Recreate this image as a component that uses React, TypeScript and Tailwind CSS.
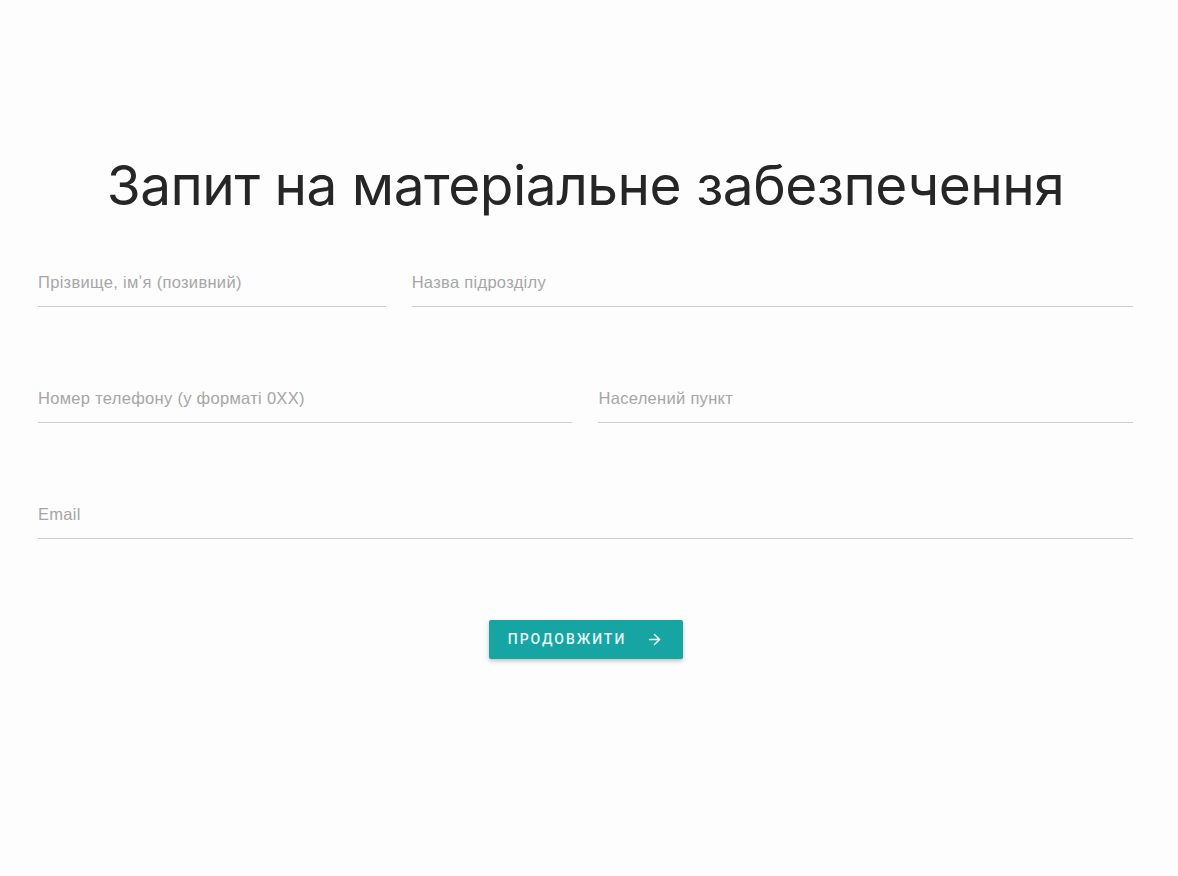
import { ArrowRight } from 'lucide-react';

interface FieldProps {
  label: string;
  span: string;
}

function Field({ label, span }: FieldProps) {
  return (
    <label className={`${span} flex flex-col`}>
      <input
        placeholder={label}
        className="h-[40px] w-full bg-transparent pb-[8px] text-[16.5px] tracking-[0.3px] text-[#555] placeholder:text-[#a6a6a6] outline-none border-b-[1.5px] border-[#cdcdcd]"
        style={{ fontFamily: '"Liberation Sans", Arial, sans-serif' }}
      />
    </label>
  );
}

export default function App() {
  return (
    <div className="min-h-[876px] w-full bg-[#fdfdfd]" style={{ fontFamily: 'Roboto, "Noto Sans", sans-serif' }}>
      <div className="pl-[38px] pr-[45px] pt-[150px]">
        <h1
          className="text-center text-[55px] leading-[70px] font-normal text-[#262626] tracking-[-0.5px]"
          style={{ fontFamily: 'Inter, Roboto, sans-serif' }}
        >
          Запит на матеріальне забезпечення
        </h1>

        <form className="mt-[47px] grid grid-cols-6 gap-x-[26px] gap-y-[76px]">
          <Field span="col-span-2" label="Прізвище, імʼя (позивний)" />
          <Field span="col-span-4" label="Назва підрозділу" />
          <Field span="col-span-3" label="Номер телефону (у форматі 0XX)" />
          <Field span="col-span-3" label="Населений пункт" />
          <Field span="col-span-6" label="Email" />
        </form>

        <div className="mt-[81px] flex justify-center">
          <button
            type="button"
            className="flex h-[39px] w-[194px] items-center justify-center gap-[20px] rounded-[2px] bg-[#16a5a3] text-[14px] font-medium uppercase tracking-[2px] text-[#e8f7f6] shadow-[0_2px_4px_rgba(0,0,0,0.25)]"
          >
            Продовжити
            <ArrowRight size={17} strokeWidth={2.2} />
          </button>
        </div>
      </div>
    </div>
  );
}
